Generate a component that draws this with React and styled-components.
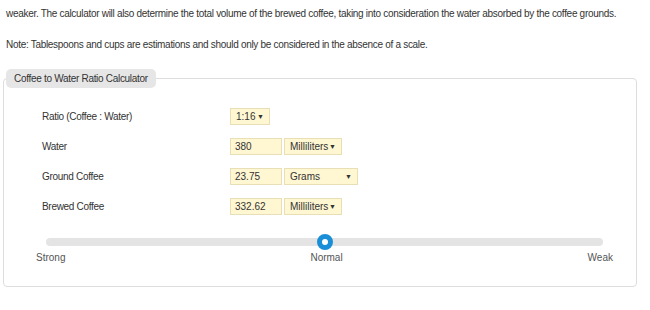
import React from 'react';
import styled, { createGlobalStyle } from 'styled-components';

const Global = createGlobalStyle`
  html, body {
    margin: 0;
    padding: 0;
    background: #fff;
  }
  body {
    font-family: "Liberation Sans", Arial, sans-serif;
    color: #333;
    letter-spacing: -0.3px;
  }
`

const Page = styled.div`
  width: 650px;
  height: 310px;
  overflow: hidden;
  padding: 0 13px 0 3px;
  box-sizing: border-box;
`

const Para = styled.p`
  margin: 0;
  padding-left: 3px;
  font-size: 10px;
  line-height: 12px;
  color: #333;
  white-space: nowrap;
  &:first-child {
    padding-top: 8px;
  }
  & + & {
    margin-top: 19px;
  }
`

const Fieldset = styled.fieldset`
  margin: 18px 0 0;
  padding: 0 0 23px;
  border: 1px solid #ddd;
  border-radius: 4px;
  min-width: 0;
`

const Legend = styled.legend`
  margin-left: 2px;
  padding: 0 8px;
  height: 19px;
  line-height: 19px;
  font-size: 10px;
  color: #333;
  background: #e6e6e6;
  border-radius: 5px;
`

const Rows = styled.div`
  display: grid;
  grid-template-columns: 188px auto;
  grid-auto-rows: 30px;
  align-items: center;
  padding: 13px 0 0 38px;
`

const Label = styled.div`
  font-size: 10px;
  color: #333;
`

const Controls = styled.div`
  display: flex;
  gap: 2px;
`

const Field = styled.div`
  box-sizing: border-box;
  height: 17px;
  border: 1px solid #e9dfb6;
  background: #fff6d2;
  font-size: 10px;
  line-height: 15px;
  color: #333;
  padding: 0 4px;
  letter-spacing: 0;
`

const Input = styled(Field)`
  width: ${p => p.$w || 52}px;
`

const Select = styled(Field)`
  width: ${p => p.$w}px;
  display: flex;
  justify-content: space-between;
  align-items: center;
  padding: 0 5px 0 5px;
  span:last-child {
    font-size: 7px;
  }
`

const SliderWrap = styled.div`
  margin: 17px 23px 0 32px;
`

const Track = styled.div`
  position: relative;
  height: 8px;
  margin: 0 10px;
  border-radius: 4px;
  background: #e4e4e4;
`

const Thumb = styled.div`
  position: absolute;
  top: 50%;
  width: 16px;
  height: 16px;
  box-sizing: border-box;
  border-radius: 50%;
  border: 5px solid #1a8ed6;
  background: #fff;
  transform: translate(-50%, -50%);
`

const Ticks = styled.div`
  display: flex;
  justify-content: space-between;
  margin-top: 6px;
  font-size: 10px;
  color: #555;
  letter-spacing: 0;
`

function Dropdown({ value, width }) {
  return (
    <Select $w={width}>
      <span>{value}</span>
      <span>▼</span>
    </Select>
  )
}

const rows = [
  { label: 'Ratio (Coffee : Water)', ratio: '1:16' },
  { label: 'Water', value: '380', unit: 'Milliliters', uw: 58 },
  { label: 'Ground Coffee', value: '23.75', unit: 'Grams', uw: 74 },
  { label: 'Brewed Coffee', value: '332.62', unit: 'Milliliters', uw: 58 },
]

export default function App() {
  const strength = 50
  return (
    <Page>
      <Global />
      <Para>
        weaker. The calculator will also determine the total volume of the brewed coffee, taking into consideration the water absorbed by the coffee grounds.
      </Para>
      <Para>
        Note: Tablespoons and cups are estimations and should only be considered in the absence of a scale.
      </Para>
      <Fieldset>
        <Legend>Coffee to Water Ratio Calculator</Legend>
        <Rows>
          {rows.map(r => (
            <React.Fragment key={r.label}>
              <Label>{r.label}</Label>
              <Controls>
                {r.ratio ? (
                  <Dropdown value={r.ratio} width={40} />
                ) : (
                  <>
                    <Input>{r.value}</Input>
                    <Dropdown value={r.unit} width={r.uw} />
                  </>
                )}
              </Controls>
            </React.Fragment>
          ))}
        </Rows>
        <SliderWrap>
          <Track>
            <Thumb style={{ left: `${strength}%` }} />
          </Track>
          <Ticks>
            <span>Strong</span>
            <span>Normal</span>
            <span>Weak</span>
          </Ticks>
        </SliderWrap>
      </Fieldset>
    </Page>
  )
}
